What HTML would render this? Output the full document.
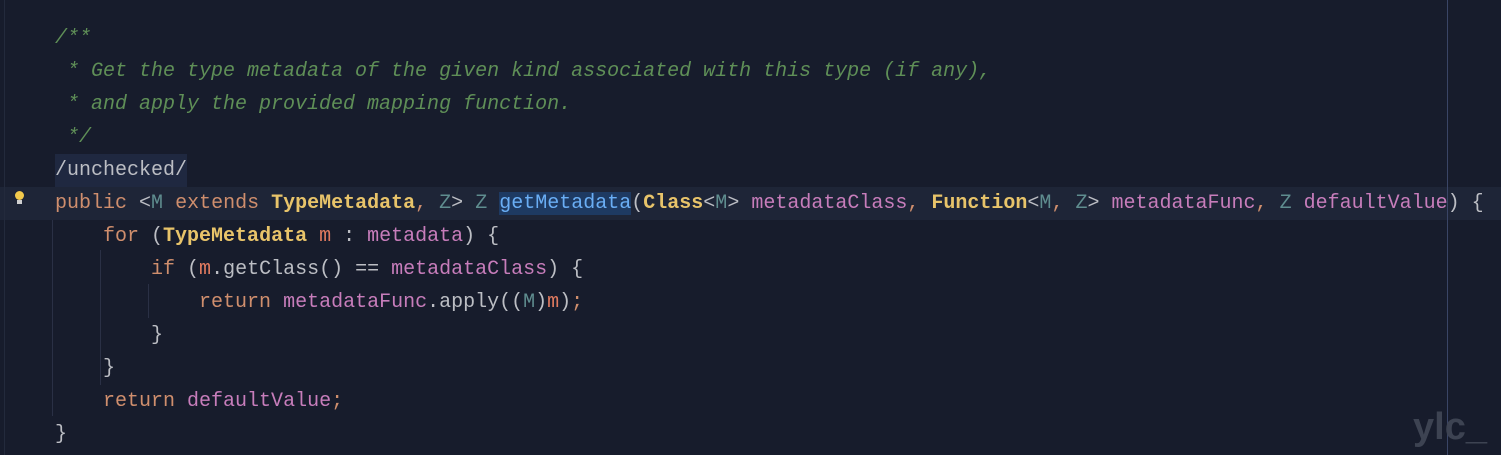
<!DOCTYPE html>
<html><head><style>
html,body{margin:0;padding:0;}
body{width:1501px;height:455px;background:#171c2c;position:relative;overflow:hidden;font-family:"Liberation Mono",monospace;font-size:20px;}
.l{position:absolute;left:55px;white-space:pre;height:33px;line-height:33px;color:#bcbec4;}
.c{color:#5f8f57;font-style:italic;}
.k{color:#cf8e6d;}
.t{color:#e8c46a;font-weight:bold;}
.g{color:#5f8d8f;}
.p{color:#c77dbb;}
.v{color:#e07a5f;}
.f{color:#6aaef5;background:#1e3a62;}
.o{color:#cf8e6d;}
.vl{position:absolute;width:1px;background:#2a3045;}
</style></head><body>
<div style="position:absolute;left:0;top:187px;width:1501px;height:33px;background:#1e2537;"></div>
<div style="position:absolute;left:55px;top:154px;width:132px;height:33px;background:#1f2840;"></div>
<div style="position:absolute;left:4px;top:0;width:1px;height:455px;background:#232a3c;"></div>
<div style="position:absolute;left:1447px;top:0;width:1px;height:455px;background:#3a4566;"></div>
<div class="vl" style="left:52px;top:220px;height:196px;"></div>
<div class="vl" style="left:100px;top:250px;height:135px;"></div>
<div class="vl" style="left:148px;top:284px;height:34px;"></div>
<div style="position:absolute;left:15px;top:191px;width:9px;height:9px;border-radius:50%;background:#f2c94c;"></div>
<div style="position:absolute;left:17px;top:200px;width:5px;height:4px;background:#d0d0d0;"></div>
<div class="l c" style="top:22px">/**</div>
<div class="l c" style="top:55px"> * Get the type metadata of the given kind associated with this type (if any),</div>
<div class="l c" style="top:88px"> * and apply the provided mapping function.</div>
<div class="l c" style="top:121px"> */</div>
<div class="l" style="top:154px">/unchecked/</div>
<div class="l" style="top:187px"><span class="k">public</span> &lt;<span class="g">M</span> <span class="k">extends</span> <span class="t">TypeMetadata</span><span class="o">,</span> <span class="g">Z</span>&gt; <span class="g">Z</span> <span class="f">getMetadata</span>(<span class="t">Class</span>&lt;<span class="g">M</span>&gt; <span class="p">metadataClass</span><span class="o">,</span> <span class="t">Function</span>&lt;<span class="g">M</span><span class="o">,</span> <span class="g">Z</span>&gt; <span class="p">metadataFunc</span><span class="o">,</span> <span class="g">Z</span> <span class="p">defaultValue</span>) {</div>
<div class="l" style="top:220px">    <span class="k">for</span> (<span class="t">TypeMetadata</span> <span class="v">m</span> : <span class="p">metadata</span>) {</div>
<div class="l" style="top:253px">        <span class="k">if</span> (<span class="v">m</span>.getClass() == <span class="p">metadataClass</span>) {</div>
<div class="l" style="top:286px">            <span class="k">return</span> <span class="p">metadataFunc</span>.apply((<span class="g">M</span>)<span class="v">m</span>)<span class="o">;</span></div>
<div class="l" style="top:319px">        }</div>
<div class="l" style="top:352px">    }</div>
<div class="l" style="top:385px">    <span class="k">return</span> <span class="p">defaultValue</span><span class="o">;</span></div>
<div class="l" style="top:418px">}</div>
<div style="position:absolute;left:1413px;top:406px;font-family:'Liberation Sans',sans-serif;font-weight:bold;font-size:38px;color:#3d4352;">ylc_</div>
</body></html>
